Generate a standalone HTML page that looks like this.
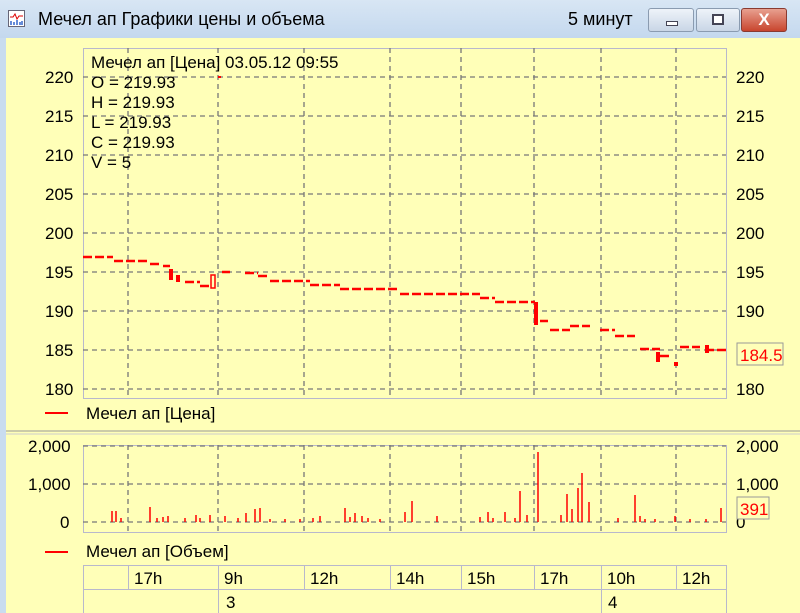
<!DOCTYPE html>
<html><head><meta charset="utf-8"><style>
body{margin:0;width:800px;height:613px;overflow:hidden;background:#c9dcef;font-family:"Liberation Sans",sans-serif}
.t{position:absolute;font-size:17px;color:#000}
</style></head><body>
<div style="position:absolute;left:0;top:0;width:800px;height:38px;background:linear-gradient(#d8e6f4,#c4d8ee)"></div>
<svg style="position:absolute;left:8px;top:10px" width="18" height="18"><rect x="0.5" y="0.5" width="16" height="16" fill="#fff" stroke="#667"/><path d="M2 7 L5 7 L7 4 L9 9 L11 6 L15 6" stroke="#d00" fill="none"/><path d="M3 15V11M6 15V12M9 15V10M12 15V12M14 15V11" stroke="#36c" stroke-width="1.5"/></svg>
<div class="t" style="left:38px;top:9px;font-size:18px">Мечел ап Графики цены и объема</div>
<div class="t" style="left:568px;top:9px;font-size:18px">5 минут</div>
<div style="position:absolute;left:648px;top:8px;width:44px;height:22px;border:1px solid #8a9bb0;border-radius:3px;background:linear-gradient(#eef3f9,#c9d6e6)"><div style="position:absolute;left:17px;top:12px;width:10px;height:3px;background:#fff;border:1px solid #445"></div></div>
<div style="position:absolute;left:696px;top:8px;width:42px;height:22px;border:1px solid #8a9bb0;border-radius:3px;background:linear-gradient(#eef3f9,#c9d6e6)"><div style="position:absolute;left:15px;top:5px;width:8px;height:7px;border:2px solid #445;background:#fff"></div></div>
<div style="position:absolute;left:741px;top:8px;width:44px;height:22px;border:1px solid #8a3a30;border-radius:3px;background:linear-gradient(#e8a090,#c8452e);color:#fff;font-weight:bold;font-size:17px;text-align:center;line-height:22px">X</div>
<div style="position:absolute;left:6px;top:38px;width:794px;height:575px;background:#ffffb8"></div>
<svg style="position:absolute;left:0;top:0" width="800" height="613" font-family="Liberation Sans" font-size="17">
<g stroke="#999" stroke-width="1"><line x1="6" y1="431" x2="800" y2="431"/><line x1="6" y1="434" x2="800" y2="434" stroke="#ccc"/></g>
<rect x="83.5" y="48.5" width="643" height="350" fill="none" stroke="#b8b8cc"/>
<g stroke="#777" stroke-dasharray="5,4" stroke-width="1.3">
<path d="M128 48V398M218 48V398M304 48V398M390 48V398M461 48V398M534 48V398M601 48V398M676 48V398"/>
<path d="M83 77H726M83 116H726M83 155H726M83 194H726M83 233H726M83 272H726M83 311H726M83 350H726M83 389H726"/>
</g>
<g fill="#000">
<text x="45" y="83">220</text><text x="45" y="122">215</text><text x="45" y="161">210</text><text x="45" y="200">205</text><text x="45" y="239">200</text><text x="45" y="278">195</text><text x="45" y="317">190</text><text x="45" y="356">185</text><text x="45" y="395">180</text>
<text x="736" y="83">220</text><text x="736" y="122">215</text><text x="736" y="161">210</text><text x="736" y="200">205</text><text x="736" y="239">200</text><text x="736" y="278">195</text><text x="736" y="317">190</text><text x="736" y="395">180</text>
<text x="91" y="68">Мечел ап [Цена] 03.05.12 09:55</text>
<text x="91" y="88">O = 219.93</text><text x="91" y="108">H = 219.93</text><text x="91" y="128">L = 219.93</text><text x="91" y="148">C = 219.93</text><text x="91" y="168">V = 5</text>
</g>
<g stroke="#f00" stroke-width="2.5" fill="none" stroke-dasharray="9,3">
<path d="M83 257H113M114 261H150M150 264H162M163 266H170M185 282H200M200 286H212M222 272H230M245 273H258M258 276H270M270 281H310M310 285H340M340 289H400M400 294H480M480 298H495M495 302H535M540 321H548M550 330H570M570 326H590M600 330H615M615 336H635M640 349H660M660 356H672M680 347H700M705 350H726"/>
</g>
<g stroke="#f00" stroke-width="4" fill="none">
<path d="M171 269V280M178 275V282M536 302V325M658 352V362M676 362V366M707 345V353"/>
</g>
<rect x="211" y="275" width="4" height="13" fill="none" stroke="#f00" stroke-width="1.5"/>
<rect x="218" y="76" width="3" height="2" fill="#f00"/>
<rect x="737" y="343" width="46" height="22" fill="#ffffb8" stroke="#999"/>
<text x="740" y="361" fill="#f00">184.5</text>
<line x1="45" y1="413" x2="68" y2="413" stroke="#f00" stroke-width="2"/>
<text x="86" y="419">Мечел ап [Цена]</text>
<rect x="83.5" y="445.5" width="643" height="87" fill="none" stroke="#b8b8cc"/>
<g stroke="#777" stroke-dasharray="5,4" stroke-width="1.3">
<path d="M128 445V532M218 445V532M304 445V532M390 445V532M461 445V532M534 445V532M601 445V532M676 445V532"/>
<path d="M83 446H726M83 484H726M83 522H726"/>
</g>
<g fill="#000"><text x="28" y="452">2,000</text><text x="28" y="490">1,000</text><text x="60" y="528">0</text>
<text x="736" y="452">2,000</text><text x="736" y="490">1,000</text><text x="736" y="528">0</text></g>
<g stroke="#f00" stroke-width="1.5">
<path d="M112 522V511M116 522V511M121 522V518M150 522V507M157 522V518M163 522V517M168 522V516M185 522V518M196 522V515M200 522V518M210 522V515M225 522V516M238 522V518M246 522V513M255 522V509M260 522V508M270 522V519M285 522V519M300 522V519M313 522V518M320 522V516M345 522V508M350 522V517M355 522V513M362 522V516M368 522V518M380 522V519M405 522V512M412 522V501M437 522V516M480 522V517M488 522V512M493 522V518M505 522V512M515 522V518M520 522V491M527 522V515M538 522V452M561 522V515M567 522V494M572 522V509M578 522V488M582 522V473M589 522V502M618 522V518M635 522V495M640 522V516M645 522V519M655 522V519M675 522V516M690 522V519M706 522V519M721 522V508"/>
</g>
<rect x="737" y="497" width="32" height="22" fill="#ffffb8" stroke="#999"/>
<text x="740" y="515" fill="#f00">391</text>
<line x1="45" y1="552" x2="68" y2="552" stroke="#f00" stroke-width="2"/>
<text x="86" y="557">Мечел ап [Объем]</text>
<g stroke="#b8b8cc" fill="none"><path d="M83.5 565.5H726M83.5 589.5H726M83.5 565V613M726.5 565V613M128.5 565V589M218.5 565V613M304.5 565V589M390.5 565V589M461.5 565V589M534.5 565V589M601.5 565V613M676.5 565V589"/></g>
<g fill="#000"><text x="134" y="584">17h</text><text x="224" y="584">9h</text><text x="310" y="584">12h</text><text x="396" y="584">14h</text><text x="467" y="584">15h</text><text x="540" y="584">17h</text><text x="607" y="584">10h</text><text x="682" y="584">12h</text>
<text x="226" y="608">3</text><text x="608" y="608">4</text></g>
</svg>
</body></html>
